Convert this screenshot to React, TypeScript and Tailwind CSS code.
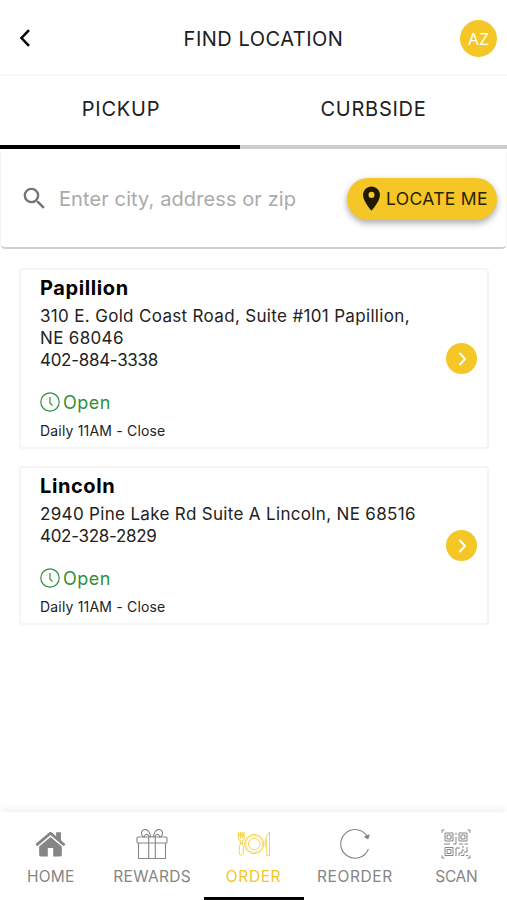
import type { ReactNode } from 'react';
import { MdLocationOn, MdSearch } from 'react-icons/md';

interface Store {
    name: string;
    address: string[];
    phone: string;
    hours: string;
}

interface NavItem {
    label: string;
    icon: ReactNode;
    active?: boolean;
    labelClass: string;
}

const stores: Store[] = [
    {
        name: 'Papillion',
        address: ['310 E. Gold Coast Road, Suite #101 Papillion,', 'NE 68046'],
        phone: '402-884-3338',
        hours: 'Daily 11AM - Close',
    },
    {
        name: 'Lincoln',
        address: ['2940 Pine Lake Rd Suite A Lincoln, NE 68516'],
        phone: '402-328-2829',
        hours: 'Daily 11AM - Close',
    },
];

function HomeIcon() {
    return (
        <svg width="31" height="26" viewBox="0 0 32 26" fill="currentColor">
            <path d="M.5 13 14.600 1a2 2 0 0 1 2.700 0l4.500 3.900V.8h5v8.400l4.700 4-1.900 2.200L16 3.800 2.400 15.400z" />
            <path d="M4.300 15.700 16 5.700l11.700 10v8.500q0 1.600-1.600 1.600h-7.300v-8.600h-5.600v8.600H5.900q-1.600 0-1.600-1.600z" />
        </svg>
    );
}

function GiftIcon() {
    return (
        <svg width="32" height="32" viewBox="0 0 32 32" fill="none" stroke="currentColor" strokeWidth="1.1">
            <rect x="1" y="9" width="30" height="6" rx="1" />
            <path d="M2.500 15v15.500h27V15M12.700 9v21.500M19.300 9v21.500" />
            <path d="M13.500 9C12 5.500 9.500 5 8 9 5 8 4.800 4.500 6.500 2.600 8.500.7 11.500 1.500 13 4q1.500 2.500 1.700 5" />
            <path d="M18.500 9c1.500-3.500 4-4 5.500 0 3-1 3.200-4.500 1.500-6.400C23.500.7 20.500 1.500 19 4q-1.500 2.500-1.700 5" />
        </svg>
    );
}

function OrderIcon() {
    return (
        <svg width="34" height="26" viewBox="0 0 34 26" fill="none" stroke="currentColor" strokeWidth=".8">
            <circle cx="17.200" cy="13" r="9.600" />
            <circle cx="17.200" cy="13" r="8.400" strokeWidth=".6" />
            <circle cx="17.200" cy="13" r="5.800" />
            <path d="M1.500 1v6.500q0 2 1.800 2v3h2v-3q1.900 0 1.900-2V1M3.500 1v6.500M5.300 1v6.500M1.500 3h5.700M1.500 5h5.700" />
            <path d="M3.300 12.500h2v1l1 1.200v8.500q-2 2.300-4 0v-8.500l1-1.200z" />
            <path d="M32.500 1.200v23.500h-2.800v-8.200l-1.500-2.200q-.5-8.500 4.300-13.100zM29.700 16.500v-8" />
        </svg>
    );
}

function ReorderIcon() {
    return (
        <svg width="32" height="32" viewBox="0 0 32 32" fill="none" stroke="currentColor" strokeWidth="1.100">
            <path d="M28.300 8.500A14.300 14.300 0 1 0 29.400 21" />
            <path d="m25.800 8.700 3.100 2 1.200-3.600z" fill="currentColor" strokeLinejoin="round" />
        </svg>
    );
}

function QrIcon() {
    return (
        <svg width="30" height="30" viewBox="0 0 30 30" fill="none" stroke="currentColor" strokeWidth="1">
            <path d="M1 4V1h2.500M26.500 1H29v3M1 26.500v2.500h2.500M26.500 29H29v-2.500" />
            <path d="M4 4h8v8H4zM18 4h8v8h-8zM4 18.500h8v8H4z" />
            <path d="M6 6h4v4H6zM20 6h4v4h-4zM6 20.500h4v4H6z" />
            <path d="M15 4v2M15 8v7h-3M3 15h6M18 15h4M23.500 15H27" />
            <path d="M15 27v-8h4M18 27v-3h3v-3h2M21 18h2M26 18v5h-3M20 26.500h3v-2M25 26.500h2" />
        </svg>
    );
}

function ClockIcon() {
    return (
        <svg width="20" height="20" viewBox="0 0 20 20" fill="none" stroke="currentColor" strokeWidth="1.200">
            <circle cx="10" cy="10" r="9.200" />
            <path d="M10 5v6l2.500 2.600" />
        </svg>
    );
}

const navItems: NavItem[] = [
    { label: 'HOME', icon: <HomeIcon />, labelClass: 'tracking-[0.2px]' },
    { label: 'REWARDS', icon: <GiftIcon />, labelClass: 'tracking-[0.3px]' },
    { label: 'ORDER', icon: <OrderIcon />, active: true, labelClass: 'tracking-[0.6px]' },
    { label: 'REORDER', icon: <ReorderIcon />, labelClass: 'tracking-[0.6px]' },
    { label: 'SCAN', icon: <QrIcon />, labelClass: 'tracking-[-0.3px]' },
];

function StoreCard({ store }: { store: Store }) {
    return (
        <div className="flex items-center rounded-[4px] border-2 border-[#f5f5f5] bg-white py-1.5 pr-2.5 pl-[19.500px]">
            <div className="min-w-0 flex-1 whitespace-nowrap">
                <h2 className="text-[20px] leading-[25px] font-bold tracking-[0.6px] text-black">{store.name}</h2>
                <div className="mt-1 text-[17px] leading-[22px] text-[#222]">
                    {store.address.map((line) => (
                        <p key={line} className="tracking-[0.33px]">{line}</p>
                    ))}
                    <p className="tracking-[-0.3px]">{store.phone}</p>
                </div>
                <div className="mt-[19px] flex h-6 items-center gap-[3px] text-[18px] tracking-[0.5px] text-[#2e9138]">
                    <ClockIcon />
                    <span>Open</span>
                </div>
                <p className="mt-[7px] text-sm leading-5 tracking-[0.18px] text-[#222]">{store.hours}</p>
            </div>
            <button className="flex size-[31px] shrink-0 items-center justify-center rounded-full bg-[#f4c626] text-white">
                <svg width="12" height="16" viewBox="0 0 12 16" fill="none" stroke="currentColor" strokeWidth="2">
                    <path d="m4.500 2 5.500 6-5.500 6" />
                </svg>
            </button>
        </div>
    );
}

export default function App() {
    return (
        <div className="flex h-[900px] w-[507px] flex-col overflow-hidden bg-white font-['Inter','Liberation_Sans',sans-serif] text-[#202020]">
            <header className="flex h-[76px] shrink-0 items-center justify-between border-b-2 border-[#f8f8f8] pt-0.5 pr-2.5 pl-[18px]">
                <button className="flex w-[49px] text-black">
                    <svg width="15" height="20" viewBox="0 0 15 20" fill="none" stroke="currentColor" strokeWidth="2.500">
                        <path d="M11 2.200 3.500 10l7.500 7.800" />
                    </svg>
                </button>
                <h1 className="pt-0.5 text-[20px] font-[370] tracking-[0.5px]">FIND LOCATION</h1>
                <div className="flex size-[37px] items-center justify-center rounded-full bg-[#f4c626] pt-px text-base text-white">AZ</div>
            </header>

            <div className="flex h-[73px] shrink-0 text-center text-[20px] leading-[66px] font-[370]">
                <div className="w-60 border-b-4 border-black pl-0.5 tracking-[0.75px]">PICKUP</div>
                <div className="flex-1 border-b-4 border-[#cdcdcd] tracking-[0.75px]">CURBSIDE</div>
            </div>

            <div className="flex h-[100px] shrink-0 items-center rounded-[5px] border-x border-b-2 border-x-[#f5f5f5] border-b-[#cfcfcf] pt-px pr-[9px] pl-[19px]">
                <MdSearch className="size-[29px] text-[#757575]" />
                <span className="ml-2.5 flex-1 text-[20px] tracking-[0.1px] whitespace-nowrap text-[#aaa]">Enter city, address or zip</span>
                <button className="flex h-[42px] w-[150px] items-center rounded-full bg-[#f4c626] pl-2.5 text-[17.5px] tracking-[0.33px] whitespace-nowrap text-[#2b2203] shadow-[0_3px_7px_rgba(0,0,0,0.35)]">
                    <MdLocationOn className="size-[29px] shrink-0 text-[#211a00]" />
                    <span className="pt-px font-[370]">LOCATE ME</span>
                </button>
            </div>

            <main className="flex flex-1 flex-col gap-[17px] px-[18.500px] pt-[19px]">
                {stores.map((store) => (
                    <StoreCard key={store.name} store={store} />
                ))}
            </main>

            <nav className="flex h-[88px] shrink-0 shadow-[0_-3px_8px_rgba(0,0,0,0.06)]">
                {navItems.map((item) => (
                    <div
                        key={item.label}
                        className={`relative flex flex-1 flex-col items-center pt-4 ${item.active ? 'text-[#f4c626]' : 'text-[#858585]'}`}
                    >
                        <div className="flex h-8 items-center">{item.icon}</div>
                        <span className={`mt-[7px] text-[15.500px] leading-5 ${item.labelClass}`}>{item.label}</span>
                        {item.active && <div className="absolute bottom-0 h-[3px] w-[100px] bg-black" />}
                    </div>
                ))}
            </nav>
        </div>
    );
}
